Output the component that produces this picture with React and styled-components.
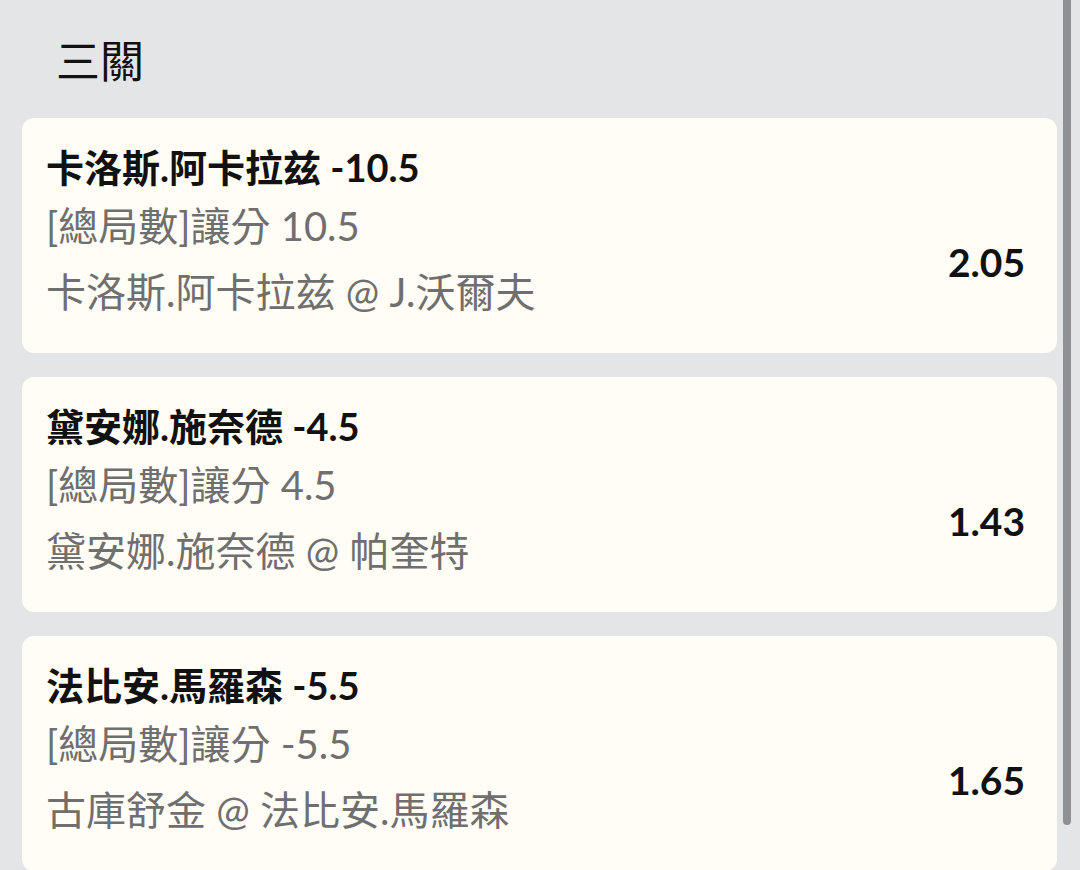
import React from "react";
import styled, { createGlobalStyle } from "styled-components";

const GlobalStyle = createGlobalStyle`
	html, body {
		margin: 0;
		padding: 0;
		background: #e4e5e7;
	}
	body {
		font-family: Lato, "Noto Sans CJK TC", sans-serif;
	}
`;

const Page = styled.div`
	width: 1080px;
	height: 870px;
	overflow: hidden;
	box-sizing: border-box;
	padding: 0 23px 0 22px;
	background: #e4e5e7;
	position: relative;
`;

const Heading = styled.h2`
	margin: 0;
	padding: 32px 0 0 34px;
	height: 118px;
	box-sizing: border-box;
	font-size: 44px;
	line-height: 58px;
	font-weight: 400;
	color: #111;
`;

const List = styled.div`
	display: flex;
	flex-direction: column;
	gap: 24px;
`;

const Card = styled.div`
	display: flex;
	justify-content: space-between;
	align-items: flex-start;
	background: #fffdf5;
	border-radius: 12px;
	padding: 19px 32px 32px 24px;
	min-height: 235px;
	box-sizing: border-box;
`;

const Info = styled.div`
	display: flex;
	flex-direction: column;
`;

const Title = styled.div`
	font-size: 38px;
	font-weight: 700;
	line-height: 60px;
	color: #111;
`;

const Line = styled.div`
	font-size: 40px;
	font-weight: 400;
	line-height: 58px;
	color: #6f6f6f;
	margin-top: ${(p) => (p.$gap ? "8px" : "0")};
`;

const Odds = styled.div`
	font-size: 39px;
	font-weight: 700;
	line-height: 58px;
	color: #111;
	margin-top: 96px;
`;

const ScrollThumb = styled.div`
	position: absolute;
	top: 0;
	right: 9px;
	width: 8px;
	height: 825px;
	background: #909094;
	border-radius: 0 0 4px 4px;
`;

const bets = [
	{
		title: "卡洛斯.阿卡拉兹 -10.5",
		market: "[總局數]讓分 10.5",
		match: "卡洛斯.阿卡拉兹 @ J.沃爾夫",
		odds: "2.05",
	},
	{
		title: "黛安娜.施奈德 -4.5",
		market: "[總局數]讓分 4.5",
		match: "黛安娜.施奈德 @ 帕奎特",
		odds: "1.43",
	},
	{
		title: "法比安.馬羅森 -5.5",
		market: "[總局數]讓分 -5.5",
		match: "古庫舒金 @ 法比安.馬羅森",
		odds: "1.65",
	},
];

const App = () => {
	return (
		<>
			<GlobalStyle />
			<Page>
				<Heading>三關</Heading>
				<List>
					{bets.map((b) => (
						<Card key={b.title}>
							<Info>
								<Title>{b.title}</Title>
								<Line>{b.market}</Line>
								<Line $gap>{b.match}</Line>
							</Info>
							<Odds>{b.odds}</Odds>
						</Card>
					))}
				</List>
				<ScrollThumb />
			</Page>
		</>
	);
};

export default App;
